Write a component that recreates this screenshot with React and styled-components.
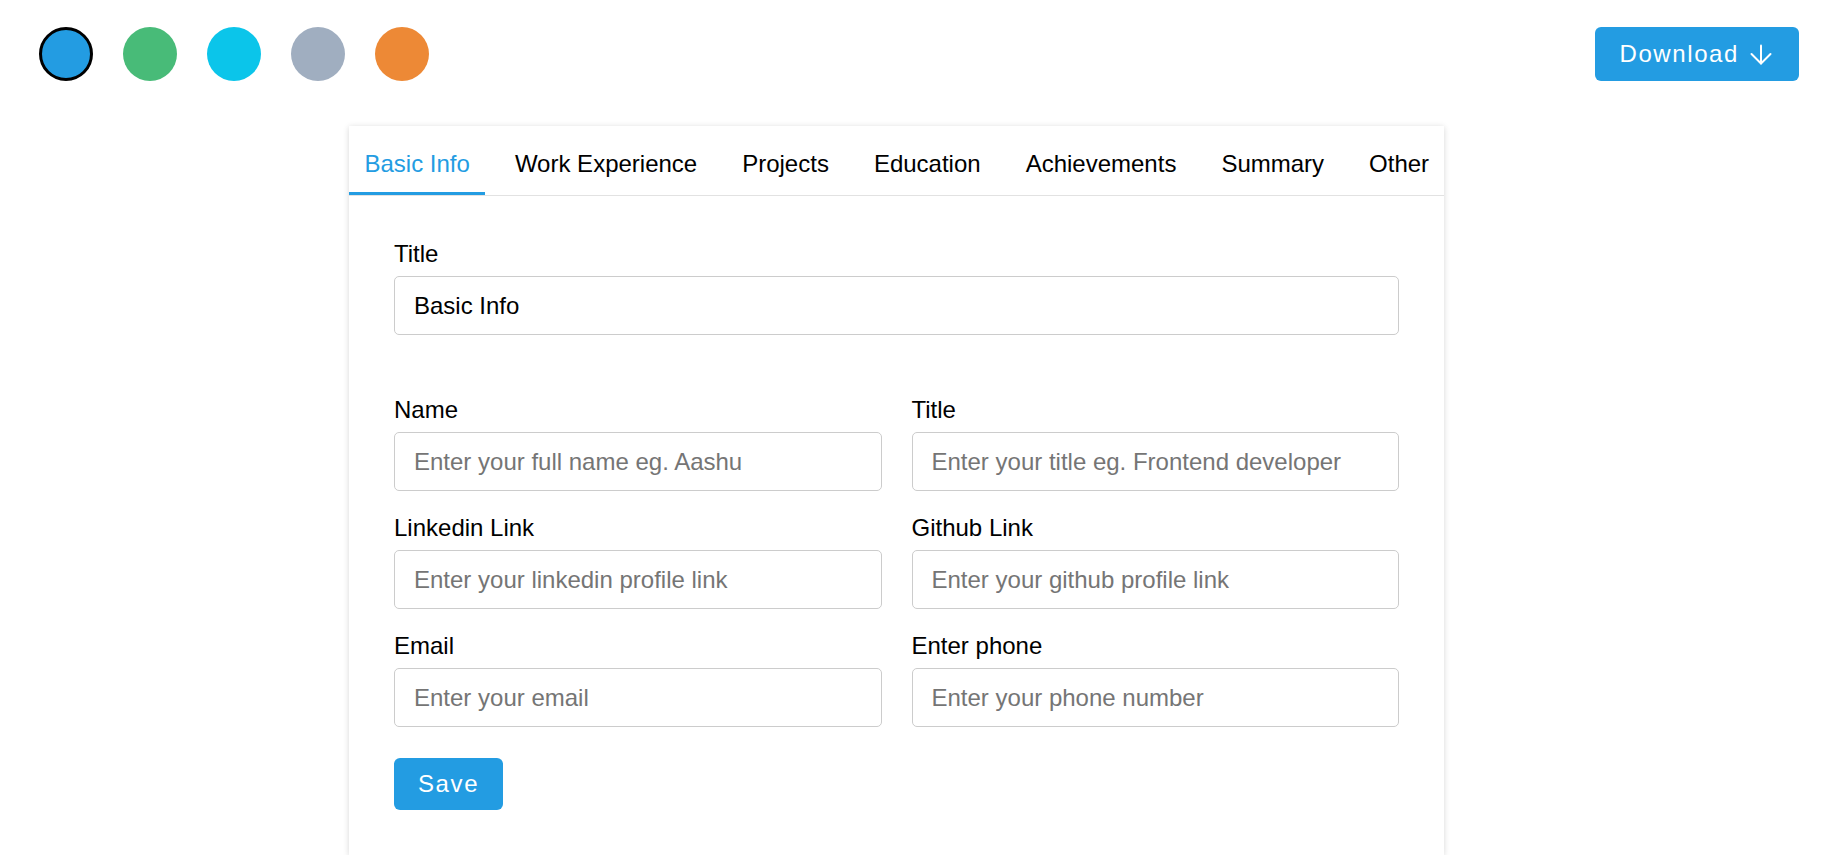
import React, { useState } from "react";
import styled, { createGlobalStyle } from "styled-components";

const BLUE = "#239ce2";

const colors = ["#239ce2", "#48bb78", "#0bc5ea", "#a0aec0", "#ed8936"];
const tabs = ["Basic Info", "Work Experience", "Projects", "Education", "Achievements", "Summary", "Other"];

const fields = [
  { label: "Name", placeholder: "Enter your full name eg. Aashu" },
  { label: "Title", placeholder: "Enter your title eg. Frontend developer" },
  { label: "Linkedin Link", placeholder: "Enter your linkedin profile link" },
  { label: "Github Link", placeholder: "Enter your github profile link" },
  { label: "Email", placeholder: "Enter your email" },
  { label: "Enter phone", placeholder: "Enter your phone number" },
];

const ArrowDownIcon = () => (
  <svg width="22" height="21" viewBox="0 0 22 21" fill="none" stroke="currentColor" strokeWidth="2" strokeLinecap="round" strokeLinejoin="round">
    <path d="M11 1.5V19.5" />
    <path d="M1.5 10L11 19.5L20.5 10" />
  </svg>
);

export default function App() {
  const [activeColor, setActiveColor] = useState(0);
  const [activeTab, setActiveTab] = useState(0);

  return (
    <>
      <GlobalStyle />
      <Page>
        <Header>
          <Colors>
            {colors.map((c, i) => (
              <ColorDot key={c} $color={c} $active={i === activeColor} onClick={() => setActiveColor(i)} />
            ))}
          </Colors>
          <PrimaryButton $download>
            Download
            <ArrowDownIcon />
          </PrimaryButton>
        </Header>

        <Card>
          <TabBar>
            {tabs.map((t, i) => (
              <Tab key={t} $active={i === activeTab} onClick={() => setActiveTab(i)}>
                {t}
              </Tab>
            ))}
          </TabBar>

          <Body>
            <Field $wide>
              <Label>Title</Label>
              <Input defaultValue="Basic Info" />
            </Field>

            <FieldGrid>
              {fields.map((f) => (
                <Field key={f.label}>
                  <Label>{f.label}</Label>
                  <Input placeholder={f.placeholder} />
                </Field>
              ))}
            </FieldGrid>

            <PrimaryButton>Save</PrimaryButton>
          </Body>
        </Card>
      </Page>
    </>
  );
}

const GlobalStyle = createGlobalStyle`
  * {
    box-sizing: border-box;
  }

  body {
    margin: 0;
    background: #fff;
    font-family: "Liberation Sans", Arial, sans-serif;
    color: #000;
  }
`;

const Page = styled.div`
  padding: 27px 41px 0 39px;
`;

const Header = styled.div`
  display: flex;
  justify-content: space-between;
  align-items: center;
`;

const Colors = styled.div`
  display: flex;
  gap: 30px;
`;

const ColorDot = styled.span`
  display: block;
  width: 54px;
  height: 54px;
  border-radius: 50%;
  background-color: ${(props) => props.$color};
  border: ${(props) => (props.$active ? "3px solid #000" : "none")};
  cursor: pointer;
`;

const PrimaryButton = styled.button`
  display: flex;
  align-items: center;
  gap: 11px;
  height: ${(props) => (props.$download ? "54px" : "52px")};
  padding: ${(props) => (props.$download ? "0 27px 0 24px" : "0 24px")};
  margin-top: ${(props) => (props.$download ? "0" : "31px")};
  border: none;
  border-radius: 6px;
  background-color: ${BLUE};
  color: #fff;
  font-family: inherit;
  font-size: 24px;
  letter-spacing: 1.6px;
  cursor: pointer;
`;

const Card = styled.div`
  width: 1095px;
  margin: 45px 0 0 310px;
  background: #fff;
  box-shadow: 0 1px 6px rgba(0, 0, 0, 0.16);
`;

const TabBar = styled.div`
  display: flex;
  gap: 14px;
  border-bottom: 1px solid #e2e2e2;
`;

const Tab = styled.div`
  padding: 24px 15.5px 15px;
  font-size: 24px;
  line-height: 27px;
  white-space: nowrap;
  color: ${(props) => (props.$active ? BLUE : "#000")};
  border-bottom: 3px solid ${(props) => (props.$active ? BLUE : "transparent")};
  cursor: pointer;
`;

const Body = styled.div`
  padding: 44px 45px 45px;
`;

const FieldGrid = styled.div`
  display: grid;
  grid-template-columns: 1fr 1fr;
  column-gap: 30px;
  row-gap: 23px;
`;

const Field = styled.div`
  display: flex;
  flex-direction: column;
  margin-bottom: ${(props) => (props.$wide ? "61px" : "0")};
`;

const Label = styled.label`
  font-size: 24px;
  line-height: 27px;
  margin-bottom: 9px;
`;

const Input = styled.input`
  width: 100%;
  height: 59px;
  padding: 0 19px;
  border: 1px solid #cccccc;
  border-radius: 5px;
  font-family: inherit;
  font-size: 24px;
  color: #000;
  outline: none;

  &::placeholder {
    color: #757575;
  }
`;
